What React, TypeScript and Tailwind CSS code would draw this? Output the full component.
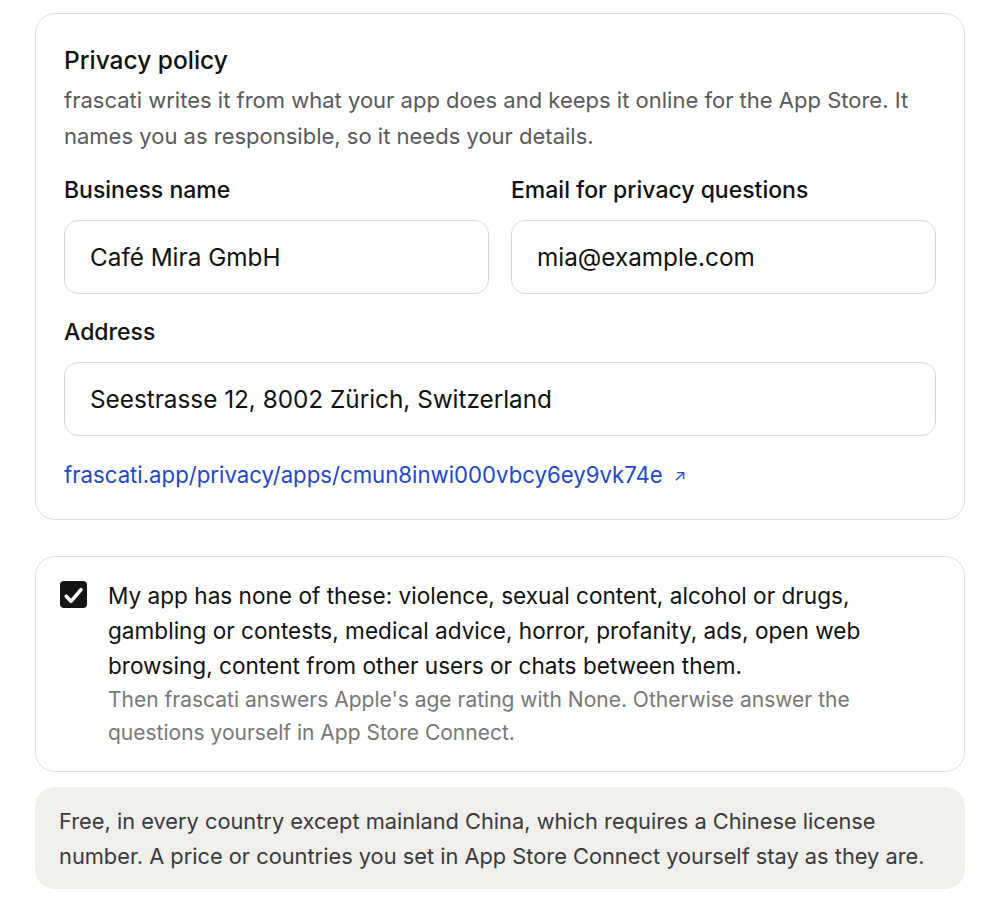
import React from "react";

function Field({ label, value }: { label: string; value: string }) {
  return (
    <div className="flex flex-col gap-[15px] min-w-0">
      <div className="text-[23px] leading-[30px] font-medium text-[#111]">{label}</div>
      <div className="h-[74px] rounded-[14px] border border-[#dcdad6] bg-white flex items-center px-[25px] text-[24.3px] text-[#111]">
        {value}
      </div>
    </div>
  );
}

export default function App() {
  return (
    <div
      className="w-[1000px] min-h-[899px] bg-white px-[35px] pt-[13px] flex flex-col"
      style={{ fontFamily: "Inter, 'Noto Sans', sans-serif" }}
    >
      <section className="rounded-[20px] border border-[#dfddd9] px-[28px] pt-[30px] pb-[28px] flex flex-col items-start">
        <h2 className="text-[24.5px] leading-[32px] font-medium text-[#111]">Privacy policy</h2>
        <p className="mt-[6px] text-[22px] leading-[36px] text-[#5a5a5a]">
          frascati writes it from what your app does and keeps it online for the App Store. It names you as
          responsible, so it needs your details.
        </p>
        <div className="mt-[21px] grid grid-cols-2 gap-[22px] w-full">
          <Field label="Business name" value="Café Mira GmbH" />
          <Field label="Email for privacy questions" value="mia@example.com" />
        </div>
        <div className="mt-[23px] w-full">
          <Field label="Address" value="Seestrasse 12, 8002 Zürich, Switzerland" />
        </div>
        <a className="mt-[23px] inline-flex items-center gap-[11px] text-[22.2px] leading-[32px] text-[#1f47c9]">
          frascati.app/privacy/apps/cmun8inwi000vbcy6ey9vk74e
          <span className="text-[16px] leading-none">↗</span>
        </a>
      </section>

      <section className="mt-[36px] rounded-[20px] border border-[#dfddd9] pl-[23.5px] pr-[28px] pt-[21px] pb-[22px] flex gap-[21.5px]">
        <div className="mt-[2.5px] w-[27px] h-[27px] shrink-0 rounded-[4px] bg-[#141414] flex items-center justify-center">
          <svg width="27" height="27" viewBox="0 0 27 27" fill="none" stroke="white" strokeWidth="3.6" strokeLinecap="round" strokeLinejoin="round">
            <path d="M6.2 15.2L11 20.3L21 8.6" />
          </svg>
        </div>
        <div>
          <p className="text-[22.6px] leading-[35px] text-[#111]">
            My app has none of these: violence, sexual content, alcohol or drugs, gambling or contests, medical
            advice, horror, profanity, ads, open web browsing, content from other users or chats between them.
          </p>
          <p className="text-[21px] leading-[33px] text-[#777]">
            Then frascati answers Apple's age rating with None. Otherwise answer the questions yourself in App
            Store Connect.
          </p>
        </div>
      </section>

      <section className="mt-[15px] rounded-[20px] bg-[#f0efec] px-[24px] pt-[17px] pb-[15px]">
        <p className="text-[21.8px] leading-[35px] text-[#3a3a3a]">
          Free, in every country except mainland China, which requires a Chinese license number. A price or
          countries you set in App Store Connect yourself stay as they are.
        </p>
      </section>
    </div>
  );
}
